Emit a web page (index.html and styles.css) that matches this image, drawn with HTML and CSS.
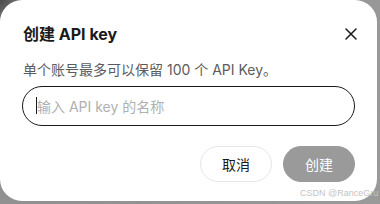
FILE: index.html
```html
<!DOCTYPE html>
<html lang="zh-CN">
<head>
  <meta charset="UTF-8" />
  <title>创建 API key</title>
  <link rel="stylesheet" href="styles.css">
</head>
<body>

  <div class="dialog">
    <div class="dialog-head">
      <h2>创建 API key</h2>
      <button class="close" aria-label="关闭">
        <svg width="12" height="12" viewBox="0 0 12 12">
          <path d="M1 1 L11 11 M11 1 L1 11" stroke="#1a1a1a" stroke-width="1.5" stroke-linecap="round" fill="none" />
        </svg>
      </button>
    </div>

    <p class="hint">单个账号最多可以保留 100 个 API Key。</p>

    <div class="field">
      <span class="caret"></span>
      <input type="text" placeholder="输入 API key 的名称" />
    </div>

    <div class="actions">
      <button class="btn">取消</button>
      <button class="btn primary" disabled>创建</button>
    </div>
  </div>

  <span class="watermark">CSDN @RanceGru</span>

</body>
</html>
```

FILE: styles.css
```css
* {
  margin: 0;
  padding: 0;
  box-sizing: border-box;
}

body {
  font-family: 'Inter', 'Noto Sans CJK SC', sans-serif;
  background: radial-gradient(circle at 0 0, #4a4a4a 0, #8a8a8a 30px, #9a9a9a 100%);
  color: #1a1a1a;
  width: 380px;
  height: 204px;
  overflow: hidden;
  position: relative;
}

.dialog {
  width: 377px;
  height: 201px;
  background: #fff;
  border-radius: 22px;
  padding: 22px 22px 0 23px;
}

.dialog-head {
  display: flex;
  justify-content: space-between;
  align-items: center;
  height: 24px;
}

.dialog-head h2 {
  font-size: 16px;
  font-weight: 700;
  line-height: 24px;
}

.close {
  border: none;
  background: none;
  display: flex;
  margin-right: -2px;
  cursor: pointer;
}

.hint {
  margin-top: 14px;
  font-size: 14px;
  line-height: 20px;
  color: #5c5c5c;
}

.field {
  position: relative;
  margin-top: 6px;
  margin-left: -1px;
}

.field input {
  width: 100%;
  height: 40px;
  border: 1px solid #1a1a1a;
  border-radius: 20px;
  padding: 0 14px;
  font-family: inherit;
  font-size: 14px;
  outline: none;
}

.field input::placeholder {
  color: #b0b0b0;
}

.caret {
  position: absolute;
  left: 14px;
  top: 11px;
  width: 1px;
  height: 17px;
  background: #1a1a1a;
}

.actions {
  display: flex;
  justify-content: flex-end;
  gap: 11px;
  margin-top: 20px;
}

.btn {
  width: 72px;
  height: 36px;
  border-radius: 18px;
  border: 1px solid #e6e6e6;
  background: #fff;
  color: #1a1a1a;
  font-family: inherit;
  font-size: 14px;
  cursor: pointer;
}

.btn.primary {
  background: #9a9a9a;
  border-color: #9a9a9a;
  color: #fff;
}

.watermark {
  position: absolute;
  left: 300px;
  top: 188px;
  font-family: 'Liberation Sans', sans-serif;
  font-size: 9px;
  color: #c4c4c4;
  white-space: nowrap;
}
```
